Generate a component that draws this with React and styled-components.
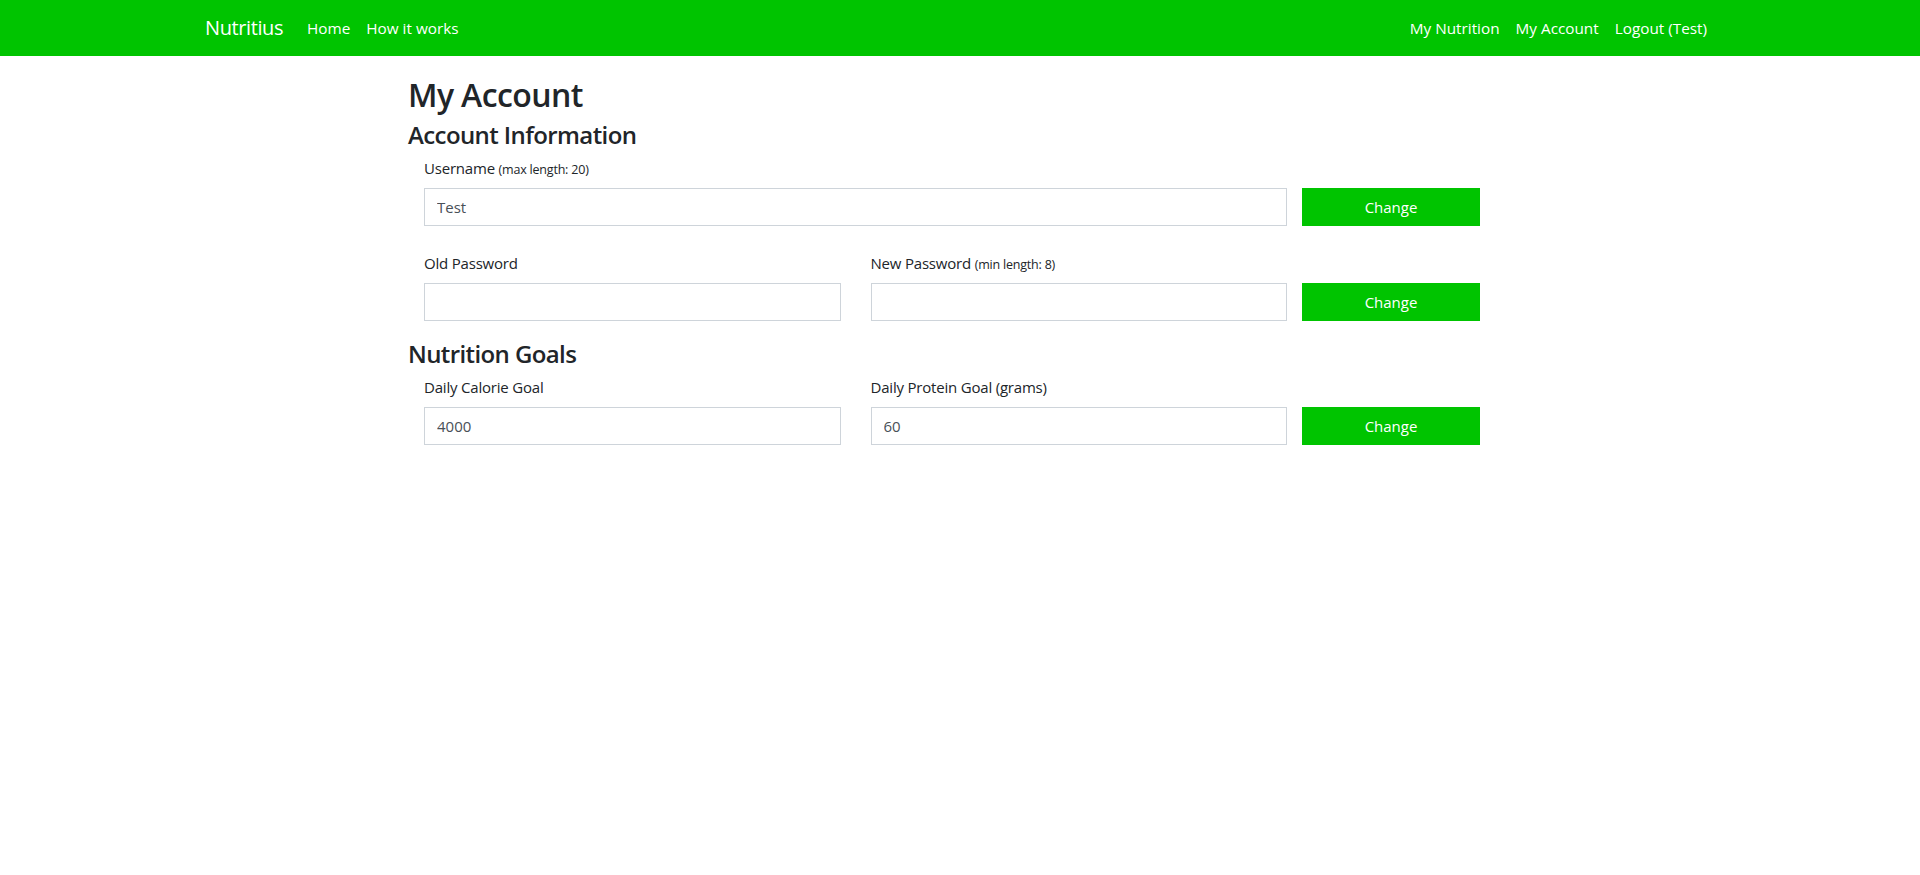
import React from "react";
import styled, { createGlobalStyle } from "styled-components";

const GREEN = "#00c400";

const GlobalStyle = createGlobalStyle`
  body {
    margin: 0;
    background: #fff;
    color: #212529;
    font-family: "Open Sans", "Noto Sans", "Liberation Sans", sans-serif;
    font-size: 16px;
    line-height: 1.5;
  }
  * {
    box-sizing: border-box;
  }
`;

const Navbar = styled.nav`
  background: ${GREEN};
  height: 56px;
  padding: 8px 205px;
  display: flex;
  align-items: center;
`;

const Brand = styled.a`
  color: #fff;
  font-size: 20px;
  line-height: 30px;
  margin-right: 16px;
  text-decoration: none;
  letter-spacing: -0.4px;
`;

const NavList = styled.ul`
  display: flex;
  list-style: none;
  margin: 0;
  padding: 0;
  margin-left: ${(p) => (p.right ? "auto" : "0")};
`;

const NavLink = styled.a`
  display: block;
  color: #fff;
  padding: 8px;
  font-size: 15.3px;
  line-height: 24px;
  text-decoration: none;
`;

const Main = styled.main`
  width: 1110px;
  margin: 0 auto;
  padding: 20px 0 0 3px;
`;

const Title = styled.h1`
  font-size: 32px;
  font-weight: 600;
  line-height: 1.2;
  margin: 0 0 7px;
  letter-spacing: -0.6px;
`;

const SectionTitle = styled.h2`
  font-size: 24px;
  font-weight: 600;
  line-height: 1.2;
  margin: 0 0 6px;
  letter-spacing: -0.6px;
`;

const Row = styled.div`
  display: flex;
  align-items: flex-end;
  gap: 15px;
  padding-left: 16px;
  margin-bottom: 19px;

  & + & {
    margin-top: 25px;
  }
`;

const Fields = styled.div`
  width: 863px;
  display: grid;
  grid-template-columns: ${(p) => (p.cols === 2 ? "1fr 1fr" : "1fr")};
  column-gap: 30px;
`;

const Field = styled.div`
  display: flex;
  flex-direction: column;
`;

const Label = styled.label`
  display: block;
  height: 24px;
  font-size: 15px;
  line-height: 24px;
  margin-bottom: 8px;
  letter-spacing: -0.2px;
`;

const Hint = styled.small`
  font-size: 12.5px;
  line-height: 1;
  letter-spacing: -0.2px;
`;

const Input = styled.input`
  height: 38px;
  width: 100%;
  border: 1px solid #ced4da;
  border-radius: 0;
  padding: 6px 12px;
  font-family: inherit;
  font-size: 15px;
  color: #495057;
  background: #fff;
  outline: none;
`;

const Button = styled.button`
  width: 178px;
  height: 38px;
  background: ${GREEN};
  border: none;
  border-radius: 0;
  color: #fff;
  font-family: inherit;
  font-size: 15px;
  cursor: pointer;
`;

const App = () => (
  <>
    <GlobalStyle />
    <Navbar>
      <Brand href="#">Nutritius</Brand>
      <NavList>
        <li><NavLink href="#">Home</NavLink></li>
        <li><NavLink href="#">How it works</NavLink></li>
      </NavList>
      <NavList right>
        <li><NavLink href="#">My Nutrition</NavLink></li>
        <li><NavLink href="#">My Account</NavLink></li>
        <li><NavLink href="#">Logout (Test)</NavLink></li>
      </NavList>
    </Navbar>
    <Main>
      <Title>My Account</Title>
      <SectionTitle>Account Information</SectionTitle>
      <Row>
        <Fields>
          <Field>
            <Label>
              Username <Hint>(max length: 20)</Hint>
            </Label>
            <Input defaultValue="Test" />
          </Field>
        </Fields>
        <Button>Change</Button>
      </Row>
      <Row>
        <Fields cols={2}>
          <Field>
            <Label>Old Password</Label>
            <Input type="password" />
          </Field>
          <Field>
            <Label>
              New Password <Hint>(min length: 8)</Hint>
            </Label>
            <Input type="password" />
          </Field>
        </Fields>
        <Button>Change</Button>
      </Row>
      <SectionTitle>Nutrition Goals</SectionTitle>
      <Row>
        <Fields cols={2}>
          <Field>
            <Label>Daily Calorie Goal</Label>
            <Input defaultValue="4000" />
          </Field>
          <Field>
            <Label>Daily Protein Goal (grams)</Label>
            <Input defaultValue="60" />
          </Field>
        </Fields>
        <Button>Change</Button>
      </Row>
    </Main>
  </>
);

export default App;
